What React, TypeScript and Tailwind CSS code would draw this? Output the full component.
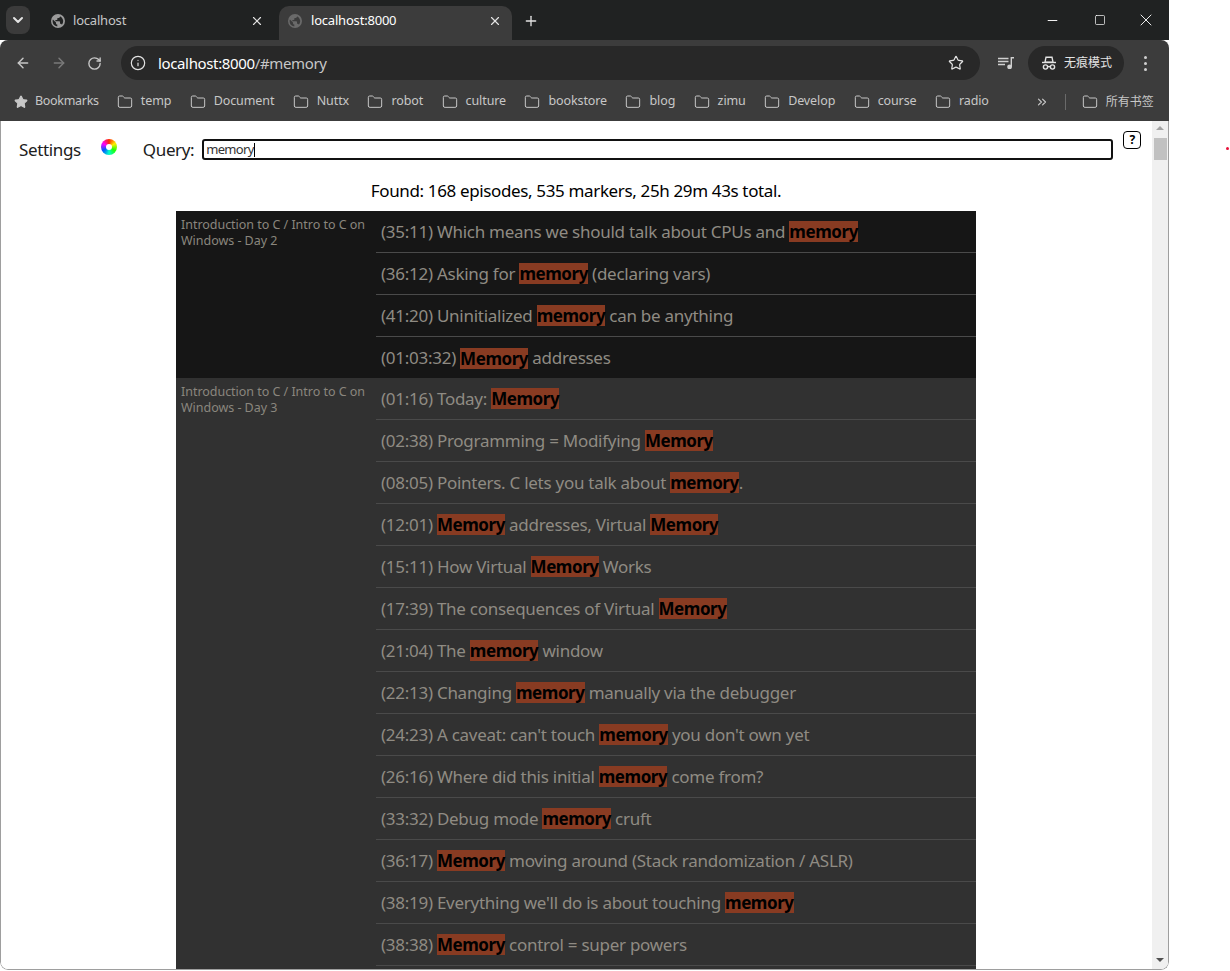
import { ArrowLeft, ArrowRight, ChevronDown, ChevronsRight, Folder, Info, Minus, Plus, RotateCw, Square, Star, X } from 'lucide-react';

const bookmarks = ['temp', 'Document', 'Nuttx', 'robot', 'culture', 'bookstore', 'blog', 'zimu', 'Develop', 'course', 'radio'];

const episodes = [
  {
    title: 'Introduction to C / Intro to C on Windows - Day 2',
    dark: true,
    markers: [
      '(35:11) Which means we should talk about CPUs and memory',
      '(36:12) Asking for memory (declaring vars)',
      '(41:20) Uninitialized memory can be anything',
      '(01:03:32) Memory addresses',
    ],
  },
  {
    title: 'Introduction to C / Intro to C on Windows - Day 3',
    dark: false,
    markers: [
      '(01:16) Today: Memory',
      '(02:38) Programming = Modifying Memory',
      '(08:05) Pointers. C lets you talk about memory.',
      '(12:01) Memory addresses, Virtual Memory',
      '(15:11) How Virtual Memory Works',
      '(17:39) The consequences of Virtual Memory',
      '(21:04) The memory window',
      '(22:13) Changing memory manually via the debugger',
      "(24:23) A caveat: can't touch memory you don't own yet",
      '(26:16) Where did this initial memory come from?',
      '(33:32) Debug mode memory cruft',
      '(36:17) Memory moving around (Stack randomization / ASLR)',
      "(38:19) Everything we'll do is about touching memory",
      '(38:38) Memory control = super powers',
    ],
  },
];

function GlobeIcon({ className }: { className: string }) {
  return (
    <svg viewBox="0 0 16 16" className={className} fill="currentColor">
      <path d="M8 1a7 7 0 1 0 0 14A7 7 0 0 0 8 1ZM2.600 8c0-.6.1-1.100.3-1.600L6 9.500v.7c0 .7.6 1.300 1.300 1.300v1.900A5.400 5.400 0 0 1 2.600 8Zm9.300 3.700c-.2-.5-.7-.9-1.200-.9h-.7V8.900c0-.4-.3-.7-.7-.7H5.400V6.900h1.300c.4 0 .7-.3.7-.7V4.900h1.300c.7 0 1.300-.6 1.300-1.300v-.3a5.400 5.400 0 0 1 1.900 8.400Z" />
    </svg>
  );
}

function IncognitoIcon() {
  return (
    <svg viewBox="0 0 16 14" className="w-4 h-[14px]" fill="none" stroke="currentColor" strokeWidth="1.4">
      <path d="M5 1.200h6l1 5H4l1-5Z" />
      <path d="M1 6.500h14" />
      <circle cx="4.500" cy="11" r="2.100" />
      <circle cx="11.500" cy="11" r="2.100" />
      <path d="M6.600 10.600h2.800" />
    </svg>
  );
}

function QueueIcon() {
  return (
    <svg viewBox="0 0 16 12" className="ml-[18px] w-4 h-3 text-[#d0d0d0]" fill="none" stroke="currentColor" strokeWidth="1.4">
      <path d="M0 1.500h10.500M0 4.500h10.500M0 7.500h7" />
      <path d="M13.300 9.800V.7H16" />
      <circle cx="11.600" cy="9.800" r="1.700" fill="currentColor" />
    </svg>
  );
}

function MenuDots() {
  return (
    <div className="ml-[20px] flex flex-col gap-[3px]">
      <div className="w-[3px] h-[3px] rounded-full bg-[#d0d0d0]" />
      <div className="w-[3px] h-[3px] rounded-full bg-[#d0d0d0]" />
      <div className="w-[3px] h-[3px] rounded-full bg-[#d0d0d0]" />
    </div>
  );
}

function MarkerText({ text }: { text: string }) {
  const parts = text.split(/(memory)/i);
  return (
    <>
      {parts.map((part, i) =>
        part.toLowerCase() === 'memory' ? (
          <span key={i} className="inline-block h-[21px] leading-[21px] bg-[#883b22] text-black font-bold tracking-[-0.45px]">
            {part}
          </span>
        ) : (
          <span key={i}>{part}</span>
        )
      )}
    </>
  );
}

function TabStrip() {
  return (
    <div className="h-10 flex items-end pl-[6px] bg-[#202222] text-[#e3e3e3] text-[13px] tracking-[-0.2px]">
      <div className="w-6 h-7 mb-[6px] rounded-lg bg-[#3b3b3b] flex items-center justify-center">
        <ChevronDown className="w-4 h-4" strokeWidth={3} />
      </div>
      <div className="w-[249px] h-[34px] flex items-center pl-[20px] pr-[15px] pb-1">
        <GlobeIcon className="w-4 h-4 text-[#9b9b9b]" />
        <span className="ml-[7px] flex-1 text-[#c7c7c7]">localhost</span>
        <X className="w-[14px] h-[14px]" />
      </div>
      <div className="w-[233px] h-[34px] rounded-t-[10px] bg-[#3c3c3c] flex items-center pl-[8px] pr-[10px] pb-1">
        <GlobeIcon className="w-4 h-4 text-[#6a6a6a]" />
        <span className="ml-[8px] flex-1 text-white">localhost:8000</span>
        <X className="w-[14px] h-[14px]" />
      </div>
      <div className="ml-[11px] h-[34px] flex items-center pb-1">
        <Plus className="w-4 h-4" />
      </div>
      <div className="ml-auto h-10 flex items-center text-white">
        <div className="w-[46px] flex justify-center pr-[3px]"><Minus className="w-[15px] h-[15px]" strokeWidth={1.5} /></div>
        <div className="w-[46px] flex justify-center"><Square className="w-[12px] h-[12px]" strokeWidth={1.4} /></div>
        <div className="w-[46px] flex justify-center"><X className="w-[20px] h-[20px]" strokeWidth={1.1} /></div>
      </div>
    </div>
  );
}

function Toolbar() {
  return (
    <div className="h-[45px] flex items-center bg-[#3c3c3c] text-[#c7c7c7] pt-[1px] rounded-t-lg -mt-px">
      <div className="w-[121px] flex items-center pl-[15px] gap-[20px]">
        <ArrowLeft className="w-4 h-4" strokeWidth={2.2} />
        <ArrowRight className="w-4 h-4 text-[#7a7a7a]" strokeWidth={2.2} />
        <RotateCw className="w-[15px] h-[15px]" strokeWidth={2.2} />
      </div>
      <div className="w-[859px] h-[34px] rounded-full bg-[#282828] flex items-center pl-[9px] pr-[16px] text-[15px] tracking-[-0.36px]">
        <Info className="w-4 h-4 text-[#e3e3e3]" strokeWidth={1.8} />
        <span className="ml-[12px] flex-1 text-white">
          localhost:8000<span className="text-[#c7c7c7]">/#memory</span>
        </span>
        <Star className="w-4 h-4 text-[#e3e3e3]" strokeWidth={1.8} />
      </div>
      <QueueIcon />
      <div className="ml-[14px] w-24 h-[34px] rounded-full bg-[#282828] flex items-center pl-[13px] gap-[7px] text-[12px] text-[#e3e3e3]">
        <IncognitoIcon />
        <span>无痕模式</span>
      </div>
      <MenuDots />
    </div>
  );
}

function BookmarksBar() {
  return (
    <div className="h-9 flex items-center bg-[#3c3c3c] text-[#c7c7c7] text-[12.5px] tracking-[-0.1px] pl-[14px] pb-[3px]">
      <Star className="w-[14px] h-[14px] text-[#c7c7c7]" fill="currentColor" />
      <span className="ml-[7px] mr-[18px] tracking-[-0.3px]">Bookmarks</span>
      <div className="w-[932px] flex items-center gap-[18.4px]">
        {bookmarks.map((name) => (
          <div key={name} className="flex items-center gap-[8px]">
            <Folder className="w-4 h-4" strokeWidth={1.5} />
            <span>{name}</span>
          </div>
        ))}
        <ChevronsRight className="ml-auto w-[14px] h-[14px]" />
      </div>
      <div className="ml-[16px] w-px h-4 bg-[#6a6a6a]" />
      <Folder className="ml-[16px] w-4 h-4" strokeWidth={1.5} />
      <span className="ml-[8px] text-[12px] tracking-normal">所有书签</span>
    </div>
  );
}

function ScrollBar() {
  return (
    <div className="w-4 shrink-0 bg-[#f0f0f0] flex flex-col items-center">
      <div className="mt-[5px] w-0 h-0 border-x-[4px] border-x-transparent border-b-[4px] border-b-[#a3a3a3]" />
      <div className="mt-[8px] w-[13px] h-[22px] bg-[#c1c1c1]" />
      <div className="mt-auto mb-[7px] w-0 h-0 border-x-[4px] border-x-transparent border-t-[4px] border-t-[#505050]" />
    </div>
  );
}

function Header() {
  return (
    <div className="h-[52px] flex items-start text-[#202020] text-[17px] tracking-[-0.36px]">
      <span className="ml-[18px] mt-[16px] leading-[25px]">Settings</span>
      <div className="ml-[20px] mt-[18px] w-4 h-4 rounded-full bg-[conic-gradient(#ff2a00,#ffee00,#22ff00,#00ffcc,#0055ff,#ff00ff,#ff2a00)] flex items-center justify-center">
        <div className="w-[6px] h-[6px] rounded-full bg-white" />
      </div>
      <span className="ml-[26px] mt-[16px] leading-[25px]">Query:</span>
      <div className="ml-[8px] mt-[18px] w-[911px] h-[21px] rounded-[3px] border-2 border-[#111] flex items-center pl-[2px] text-[13px] tracking-[-0.7px] text-[#333]">
        memory
        <span className="w-px h-[14px] bg-black" />
      </div>
      <div className="ml-[10px] mt-[10px] w-[18px] h-[18px] rounded-[4px] border-[1.5px] border-black flex items-center justify-center text-[12px] font-bold leading-none text-black">
        ?
      </div>
    </div>
  );
}

export default function App() {
  return (
    <div className="h-[971px] bg-white overflow-hidden relative font-['Noto_Sans','Noto_Sans_CJK_SC',sans-serif]">
      <div className="w-[1169px] h-[970px] flex flex-col rounded-b-lg overflow-hidden">
        <TabStrip />
        <div className="mt-px">
          <Toolbar />
          <BookmarksBar />
        </div>
        <div className="flex-1 min-h-0 flex border-x border-b border-[#9e9e9e] rounded-b-lg overflow-hidden">
          <main className="flex-1 min-w-0 overflow-hidden bg-white pr-px">
            <Header />
            <div className="h-[38px] text-center text-black text-[17px] tracking-[-0.36px] leading-9">
              Found: 168 episodes, 535 markers, 25h 29m 43s total.
            </div>
            <div className="w-[800px] mx-auto">
              {episodes.map((episode) => (
                <div key={episode.title} className={`flex ${episode.dark ? 'bg-[#161616]' : 'bg-[#313131]'}`}>
                  <div className="w-[200px] shrink-0 px-[5px] py-[6px] text-[12.5px] tracking-[-0.03px] leading-4 text-[#8a867e]">
                    {episode.title}
                  </div>
                  <div className="flex-1">
                    {episode.markers.map((marker, i) => (
                      <div
                        key={marker}
                        className={`h-[42px] px-[5px] flex items-center whitespace-pre text-[17px] tracking-[-0.27px] text-[#8f8b83] ${
                          episode.dark && i === episode.markers.length - 1 ? '-mb-px' : 'border-b border-[#4a4a4a]'
                        }`}
                      >
                        <MarkerText text={marker} />
                      </div>
                    ))}
                  </div>
                </div>
              ))}
              <div className="h-10 bg-[#313131]" />
            </div>
          </main>
          <ScrollBar />
        </div>
      </div>
      <div className="absolute left-[1226px] top-[147px] w-[3px] h-[3px] rounded-full bg-[#e8103a]" />
    </div>
  );
}
